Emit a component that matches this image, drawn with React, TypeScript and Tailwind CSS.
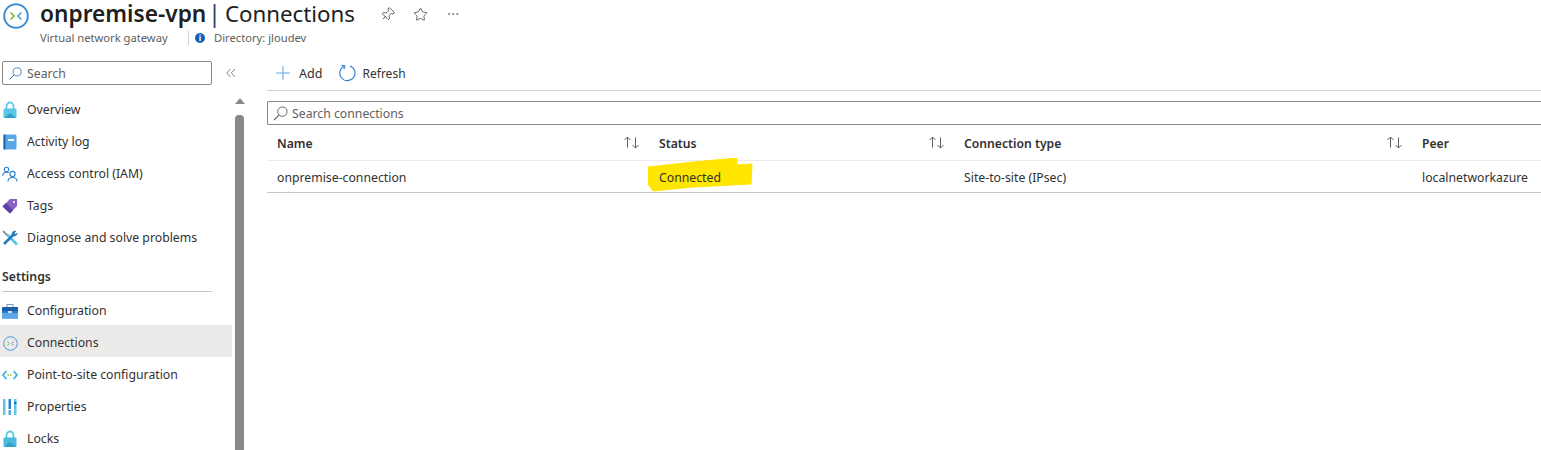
import { Ellipsis, Pin, Plus, Star } from "lucide-react";
import type { ReactNode } from "react";

const font = "font-['Noto_Sans','Open_Sans',sans-serif]";

// Small gateway glyph shared by the title and the nav row
function GatewayIcon({ size, stroke }: { size: number; stroke: number }) {
  return (
    <svg width={size} height={size} viewBox="0 0 26 26" fill="none">
      <circle cx="13" cy="13" r="11.8" stroke="#3f8fd8" strokeWidth={stroke} />
      <path d="M7.5 9.5l3.6 3.5-3.6 3.5" stroke="#7ab833" strokeWidth="1.6" />
      <path d="M18.5 9.5L14.9 13l3.6 3.5" stroke="#3aa7c9" strokeWidth="1.6" />
    </svg>
  );
}

// Lens up-right, handle down-left, like the portal's search boxes
function SearchIcon({ size, color }: { size: number; color: string }) {
  return (
    <svg width={size} height={size} viewBox="0 0 16 16" fill="none" stroke={color} strokeWidth="1">
      <circle cx="10" cy="6" r="5" />
      <path d="M6.3 9.7L1 15" strokeWidth="1.2" />
    </svg>
  );
}

function LockIcon({ light }: { light?: boolean }) {
  return (
    <svg width="14" height="18" viewBox="0 0 14 18" fill="none">
      <path d="M3.5 8V5a3.5 3.5 0 017 0v3" stroke="#5ccbe8" strokeWidth="1.8" />
      <rect x="0.5" y="7.5" width="13" height="9.5" rx="1" fill={light ? "#49b9dc" : "#5cc6e6"} />
      <path d="M1 17l6-5 6 5z" fill="#2fa3c9" />
    </svg>
  );
}

const LogIcon = (
  <svg width="14" height="16" viewBox="0 0 14 16">
    <rect x="0.5" y="0.5" width="13" height="15" rx="1.5" fill="#5ba6e6" />
    <rect x="0.5" y="0.5" width="2" height="15" fill="#1f66b5" />
    <rect x="5" y="5" width="6" height="2" fill="#fff" />
  </svg>
);

const IamIcon = (
  <svg width="16" height="16" viewBox="0 0 16 16" fill="none" stroke="#2f7fd0" strokeWidth="1.1">
    <circle cx="4.5" cy="3.5" r="2.2" />
    <path d="M0.8 10c0-2.5 1.5-3.8 3.7-3.8 1 0 1.6.2 2.2.6" />
    <circle cx="10.5" cy="8" r="2.6" />
    <path d="M6 15.5c0-2.5 1.8-4 4.5-4s4.5 1.5 4.5 4" />
  </svg>
);

const TagIcon = (
  <svg width="16" height="16" viewBox="0 0 16 16">
    <path d="M8 1h7v7l-7 7.5L0.5 8.5z" fill="#8661c5" />
    <path d="M0.5 8.5L8 15.5l3-3.2L4 5z" fill="#5e3fa8" />
    <circle cx="12" cy="4" r="1" fill="#fff" />
  </svg>
);

const ToolsIcon = (
  <svg width="16" height="16" viewBox="0 0 16 16" fill="none">
    <path d="M5 4.5l10 10" stroke="#5fc0ea" strokeWidth="2.6" />
    <path d="M1 1l4 4" stroke="#8a949e" strokeWidth="2" />
    <path d="M11 5L2 14" stroke="#2a7cb8" strokeWidth="2.6" />
    <path d="M9.8 5a3.4 3.4 0 014.7-4l-2 2 1 1 2-1.6A3.4 3.4 0 0111 6.2z" fill="#2a7cb8" />
  </svg>
);

const BriefcaseIcon = (
  <svg width="16" height="15" viewBox="0 0 16 15">
    <rect x="5" y="0.5" width="6" height="3" fill="none" stroke="#7a9cc0" />
    <rect x="0" y="3" width="16" height="11.5" fill="#2f7fd0" />
    <rect x="0" y="3" width="16" height="4" fill="#1b5fa8" />
    <rect x="0" y="9" width="16" height="5.5" fill="#5ba6e6" />
    <rect x="6" y="7" width="4" height="2" fill="#cfe4f7" />
  </svg>
);

const PointIcon = (
  <svg width="16" height="10" viewBox="0 0 16 10" fill="none">
    <path d="M4.5 1L1 5l3.5 4" stroke="#40b5e0" strokeWidth="1.8" />
    <path d="M11.5 1L15 5l-3.5 4" stroke="#40b5e0" strokeWidth="1.8" />
    <path d="M5.5 5h5" stroke="#7ab833" strokeWidth="1.6" strokeDasharray="1.4 1.2" />
  </svg>
);

const PropertiesIcon = (
  <svg width="14" height="16" viewBox="0 0 14 16">
    <rect x="0" y="0" width="2.5" height="16" fill="#5cc6e6" />
    <rect x="5.5" y="0" width="2.5" height="10" fill="#2f7fd0" />
    <rect x="5.5" y="11" width="2.5" height="5" fill="#5ba6e6" />
    <rect x="11" y="0" width="2.5" height="16" fill="#5cc6e6" />
    <rect x="11" y="3" width="2.5" height="2" fill="#1f66b5" />
  </svg>
);

function NavItem({
  icon,
  label,
  active,
  settings,
}: {
  icon: ReactNode;
  label: string;
  active?: boolean;
  settings?: boolean;
}) {
  return (
    <div className={`flex h-8 items-center ${active ? "bg-[#edebe9]" : ""} ${settings ? "pt-[4px]" : ""}`}>
      <div className="flex w-[27px] shrink-0 justify-center pr-[7px]">{icon}</div>
      <span className="text-[12.25px] text-[#323130] whitespace-nowrap">{label}</span>
    </div>
  );
}

function SortIcon() {
  return (
    <svg width="17" height="13" viewBox="0 0 17 13" fill="none" stroke="#605e5c" strokeWidth="1">
      <path d="M4.5 11.5V1M1.5 4l3-3 3 3" />
      <path d="M12.5 1.5V12M9.5 9l3 3 3-3" />
    </svg>
  );
}

function HeaderCell({ label, width, sort }: { label: string; width: string; sort?: boolean }) {
  return (
    <div className={`flex items-center justify-between pl-[10px] pr-[9px] ${width}`}>
      <span className="pt-[3px] text-[12.2px] font-semibold text-[#323130]">{label}</span>
      {sort && <SortIcon />}
    </div>
  );
}

export default function App() {
  return (
    <div className={`h-[450px] w-[1541px] overflow-hidden bg-white ${font}`}>
      {/* Title */}
      <div className="flex h-[48px] pl-[3px]">
        <div className="pt-[3px]">
          <GatewayIcon size={26} stroke={2} />
        </div>
        <div className="ml-[11px]">
          <div className="flex h-[28px] items-center">
            <h1 className="flex items-baseline text-[22.7px] leading-[28px] text-[#201f1e] whitespace-nowrap">
              <span className="font-semibold">onpremise-vpn</span>
              <span className="ml-[2px] text-[#1b3a5c]">|</span>
              <span className="ml-[4px] text-[22.3px]">Connections</span>
            </h1>
            <Pin size={15} strokeWidth={1.2} className="ml-[25px] rotate-45 text-[#323130]" />
            <Star size={15} strokeWidth={1.2} className="ml-[18px] text-[#323130]" />
            <Ellipsis size={14} strokeWidth={1.2} className="ml-[18px] text-[#605e5c]" />
          </div>
          <div className="mt-[2px] flex items-center text-[11.2px] leading-[16px] text-[#605e5c]">
            <span className="w-[148px]">Virtual network gateway</span>
            <span className="h-[14px] w-px bg-[#d2d0ce]" />
            <span className="ml-[6px] flex h-[10px] w-[10px] items-center justify-center rounded-full bg-[#0f62b8] text-[8px] font-bold leading-none text-white">
              i
            </span>
            <span className="ml-[9px]">Directory: jloudev</span>
          </div>
        </div>
      </div>

      <div className="flex">
        {/* Sidebar */}
        <aside className="w-[244px] shrink-0 pt-[13px]">
          <div className="flex items-start">
            <div className="ml-[2px] flex h-[24px] w-[210px] items-center rounded-[2px] border border-[#8a8886] pl-[6px]">
              <SearchIcon size={13} color="#2f6fb5" />
              <span className="ml-[5px] pt-[3px] text-[12.25px] text-[#605e5c]">Search</span>
            </div>
            <svg width="10" height="10" viewBox="0 0 10 10" fill="none" stroke="#8a8886" className="ml-[14px] mt-[7px]">
              <path d="M4.5 1L0.8 5l3.7 4M9 1L5.3 5 9 9" />
            </svg>
          </div>
          <div className="mt-[9px] flex h-[400px]">
            <nav className="w-[232px] shrink-0">
              <NavItem icon={<LockIcon />} label="Overview" />
              <NavItem icon={LogIcon} label="Activity log" />
              <NavItem icon={IamIcon} label="Access control (IAM)" />
              <NavItem icon={TagIcon} label="Tags" />
              <NavItem icon={ToolsIcon} label="Diagnose and solve problems" />
              <div className="mt-[14px] ml-[2px] w-[210px] border-b border-[#c8c6c4] pb-[5px] text-[12.25px] font-semibold leading-[18px] text-[#323130]">
                Settings
              </div>
              <div className="h-[1px]" />
              <NavItem icon={BriefcaseIcon} label="Configuration" settings />
              <NavItem icon={<GatewayIcon size={15} stroke={1.6} />} label="Connections" active settings />
              <NavItem icon={PointIcon} label="Point-to-site configuration" settings />
              <NavItem icon={PropertiesIcon} label="Properties" settings />
              <NavItem icon={<LockIcon light />} label="Locks" settings />
            </nav>
            <div className="ml-[3px] w-[9px]">
              <div className="mx-auto mt-[4px] h-0 w-0 border-x-[5px] border-b-[6px] border-x-transparent border-b-[#8a8886]" />
              <div className="mt-[11px] h-[340px] rounded-t-[4px] bg-[#8a8886]" />
            </div>
          </div>
        </aside>

        {/* Content */}
        <main className="min-w-0 flex-1 pl-[23px] pt-[13px]">
          <div className="flex h-[30px] items-start border-b border-[#d2d0ce]">
            <div className="flex h-[24px] items-center">
              <Plus size={22} strokeWidth={1} className="ml-[5px] text-[#4f9de0]" />
              <span className="ml-[5px] pt-[3px] text-[12.6px] text-[#323130]">Add</span>
              <svg width="18" height="18" viewBox="0 0 18 18" fill="none" className="ml-[15px]">
                <path d="M6.5 2A7.6 7.6 0 1012 1.9" stroke="#2f7fd0" strokeWidth="1.1" />
                <path d="M3.5 1.2l3.3.8-.8 3.2" stroke="#2f7fd0" strokeWidth="1.1" />
              </svg>
              <span className="ml-[7px] pt-[1px] text-[12px] text-[#323130]">Refresh</span>
            </div>
          </div>
          <div className="mt-[10px] flex h-[24px] items-center rounded-l-[2px] border-y border-l border-[#8a8886] pl-[5px]">
            <SearchIcon size={15} color="#605e5c" />
            <span className="ml-[4px] pt-[3px] text-[12.25px] text-[#605e5c]">Search connections</span>
          </div>
          <div className="flex h-[36px] border-b border-[#edebe9]">
            <HeaderCell label="Name" width="w-[382px]" sort />
            <HeaderCell label="Status" width="w-[305px]" sort />
            <HeaderCell label="Connection type" width="w-[458px]" sort />
            <HeaderCell label="Peer" width="flex-1" />
          </div>
          <div className="flex h-[32px] items-center border-b border-[#c8c6c4] pt-[3px] text-[12.25px] text-[#323130]">
            <div className="w-[382px] pl-[10px]">onpremise-connection</div>
            <div className="relative w-[305px] pl-[10px]">
              {/* hand-drawn marker highlight */}
              <svg
                width="105"
                height="34"
                viewBox="0 0 105 34"
                className="absolute left-[-1px] top-[-11px]"
              >
                <path
                  d="M0 9 L45 4 L89 0 L89 7 L104 6 L103 26 L45 29 L5 33 L0 26 Z"
                  fill="#ffe600"
                  stroke="#ffe600"
                  strokeLinejoin="round"
                />
              </svg>
              <span className="relative">Connected</span>
            </div>
            <div className="w-[458px] pl-[10px]">Site-to-site (IPsec)</div>
            <div className="flex-1 pl-[10px]">localnetworkazure</div>
          </div>
        </main>
      </div>
    </div>
  );
}
